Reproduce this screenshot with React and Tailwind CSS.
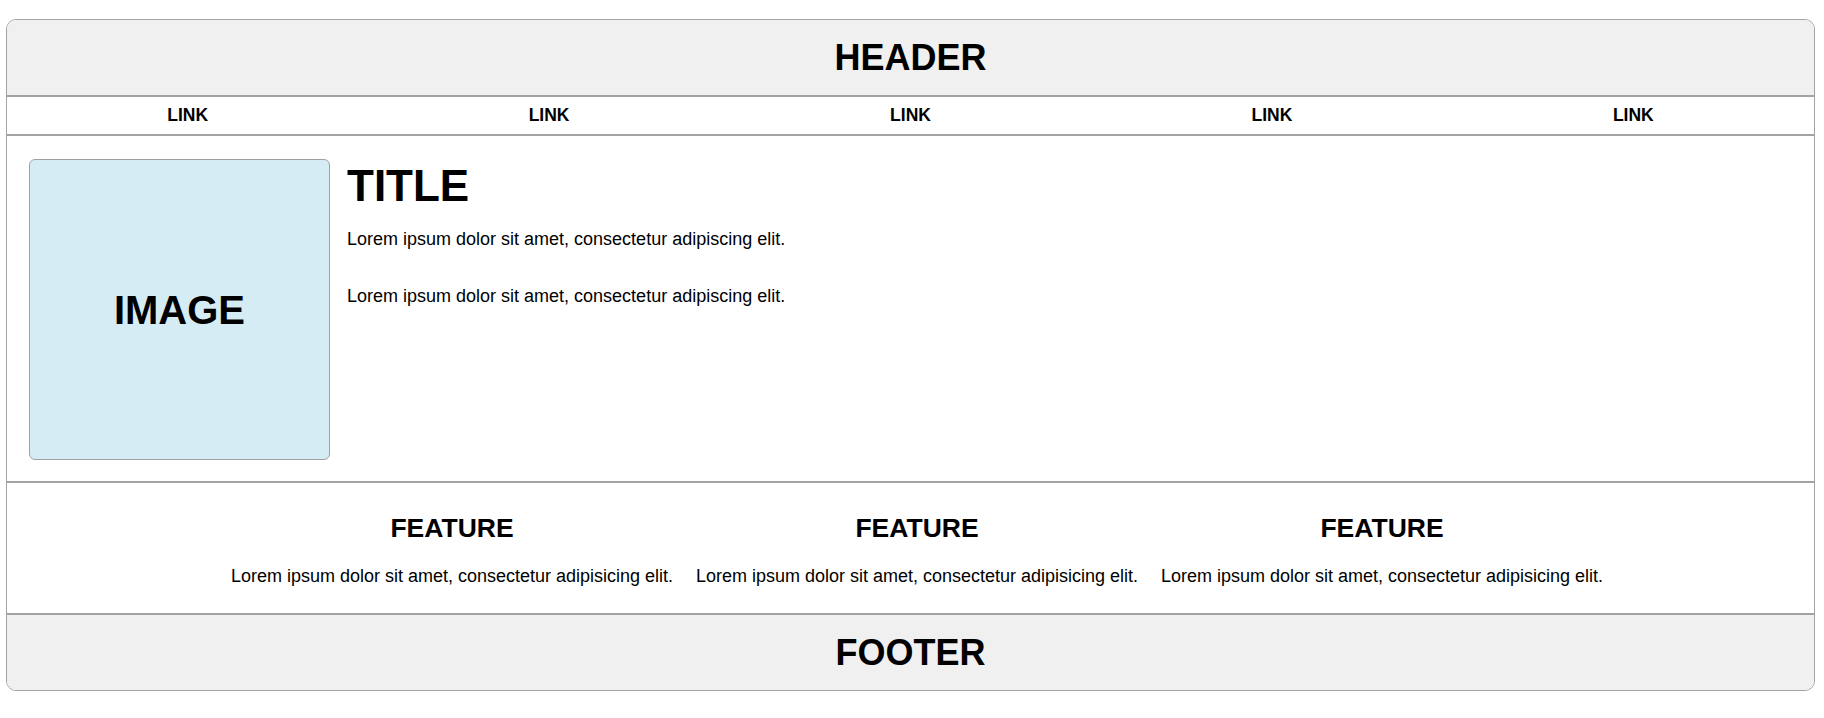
export default function App() {
  const links = ["LINK", "LINK", "LINK", "LINK", "LINK"];
  const lorem = "Lorem ipsum dolor sit amet, consectetur adipiscing elit.";
  const lorem2 = "Lorem ipsum dolor sit amet, consectetur adipisicing elit.";
  return (
    <div className="min-h-[718px] bg-white pt-[19px] text-black" style={{ fontFamily: '"Liberation Sans", Arial, sans-serif' }}>
      <div className="ml-[6px] w-[1809px] overflow-hidden rounded-[10px] border border-[#a3a3a3]">
        <header className="flex h-[77px] items-center justify-center border-b-2 border-[#a3a3a3] bg-[#f0f0f0]">
          <h1 className="text-[36px] font-bold leading-none">HEADER</h1>
        </header>
        <nav className="grid h-[39px] grid-cols-5 border-b-2 border-[#a3a3a3]">
          {links.map((l, i) => (
            <div key={i} className="flex items-center justify-center text-[17.5px] font-bold">
              {l}
            </div>
          ))}
        </nav>
        <main className="flex border-b-2 border-[#a3a3a3] px-[22px] pt-[23px] pb-[21px]">
          <div className="flex h-[301px] w-[301px] shrink-0 items-center justify-center rounded-[6px] border border-[#a0a0a0] bg-[#d6ecf4]">
            <span className="text-[40px] font-bold leading-none">IMAGE</span>
          </div>
          <div className="ml-[17px] pt-[5px]">
            <h2 className="text-[44px] font-bold leading-[44px]">TITLE</h2>
            <p className="mt-[21px] text-[18px] leading-[20px]">{lorem}</p>
            <p className="mt-[37px] text-[18px] leading-[20px]">{lorem}</p>
          </div>
        </main>
        <section className="flex justify-center border-b-2 border-[#a3a3a3] pl-[13px] pt-[30px] pb-[27px]">
          {[0, 1, 2].map((i) => (
            <div key={i} className="w-[465px] text-center">
              <h3 className="text-[26.5px] font-bold leading-[30px]">FEATURE</h3>
              <p className="mt-[23px] text-[18px] leading-[20px]">{lorem2}</p>
            </div>
          ))}
        </section>
        <footer className="flex h-[75px] items-center justify-center bg-[#f0f0f0]">
          <h2 className="text-[36px] font-bold leading-none">FOOTER</h2>
        </footer>
      </div>
    </div>
  );
}
